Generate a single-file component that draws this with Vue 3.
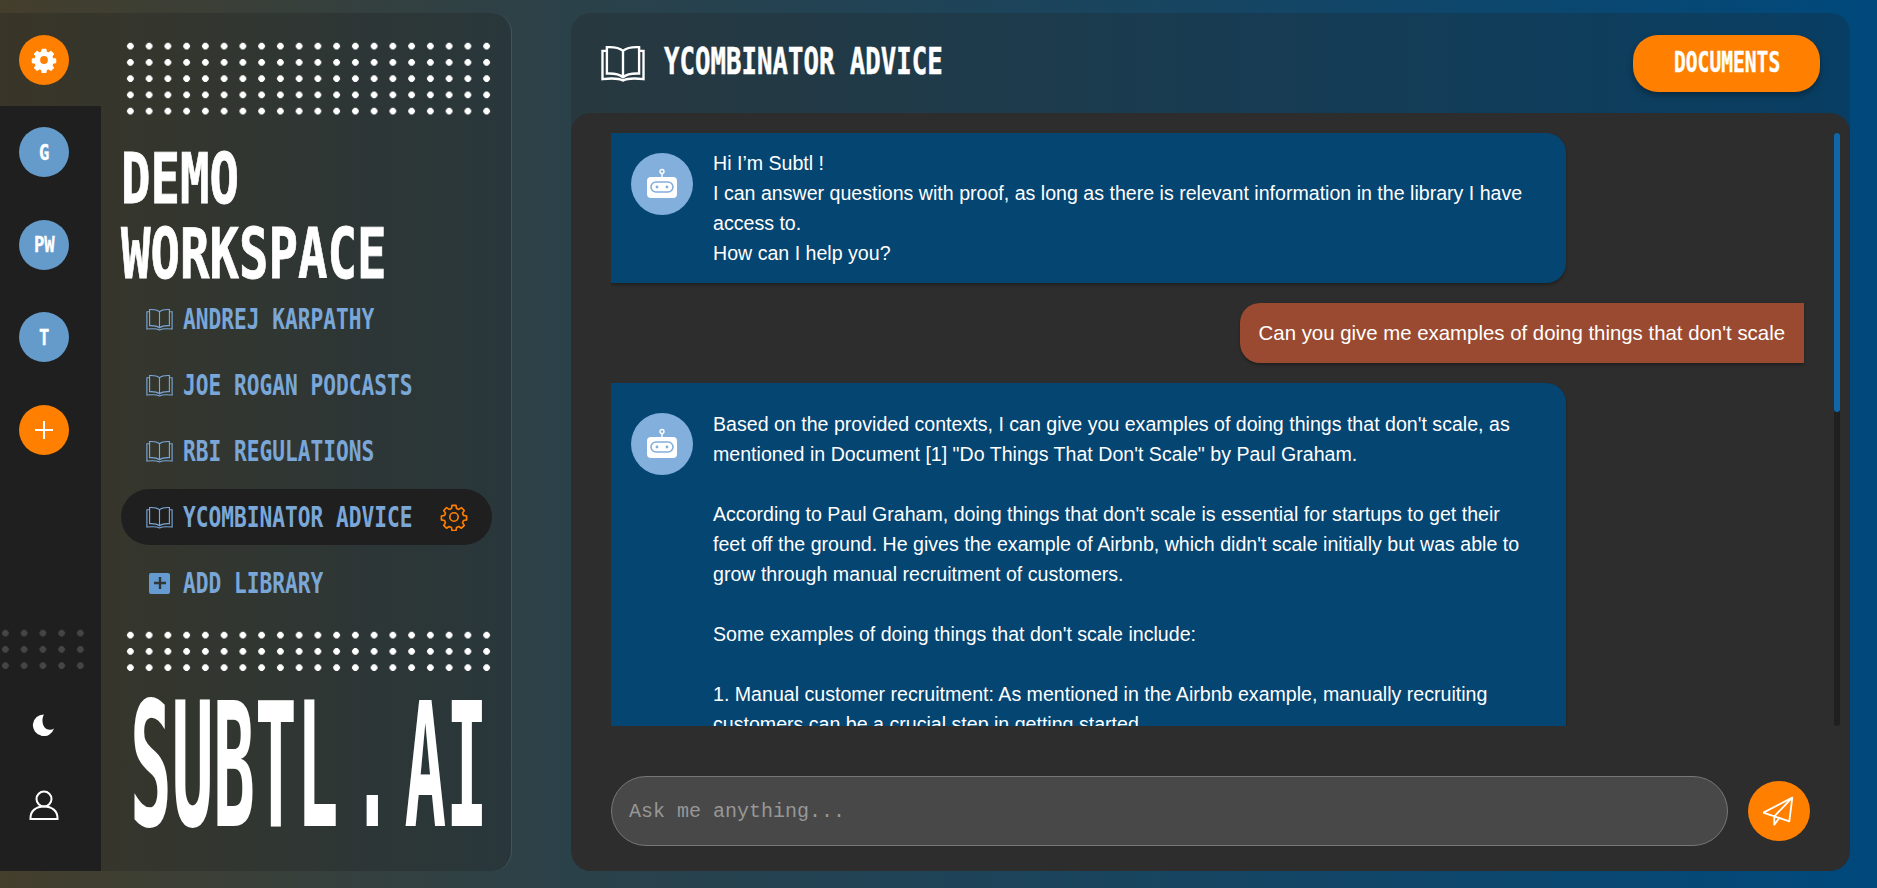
<script setup>
const libs = ['ANDREJ KARPATHY', 'JOE ROGAN PODCASTS', 'RBI REGULATIONS']
const bookPath = 'M12 3.2C10.2 1.7 7.2 1 3.2 1.2V15.6C7.2 15.4 10.2 16.1 12 17.6C13.8 16.1 16.8 15.4 20.8 15.6V1.2C16.8 1 13.8 1.7 12 3.2ZM12 3.2V17.6M3.2 3.2H.8V18.6C6 18 9.5 18 12 19.4C14.5 18 18 18 23.2 18.6V3.2H20.8'
const gearPath = 'M10.3 2h3.4l.5 2.7 1.9.8 2.3-1.5 2.4 2.4-1.5 2.3.8 1.9 2.7.5v3.4l-2.7.5-.8 1.9 1.5 2.3-2.4 2.4-2.3-1.5-1.9.8-.5 2.7h-3.4l-.5-2.7-1.9-.8-2.3 1.5-2.4-2.4 1.5-2.3-.8-1.9-2.7-.5v-3.4l2.7-.5.8-1.9-1.5-2.3 2.4-2.4 2.3 1.5 1.9-.8z'
</script>

<template>
  <div class="page">
    <aside class="sidebar">
      <div class="rail">
        <div class="rail-top">
          <button class="round orange">
            <svg width="26" height="26" viewBox="0 0 24 24"><path :d="gearPath" fill="#fff" stroke="#fff" stroke-width="1" stroke-linejoin="round" /><circle cx="12" cy="12" r="3.6" fill="#ff8000" /></svg>
          </button>
        </div>
        <div class="rail-body">
          <div class="round blue"><span class="box box-av"><span class="fit fit-av">G</span></span></div>
          <div class="round blue"><span class="box box-av2"><span class="fit fit-av">PW</span></span></div>
          <div class="round blue"><span class="box box-av"><span class="fit fit-av">T</span></span></div>
          <button class="round orange">
            <svg width="20" height="20" viewBox="0 0 20 20"><path d="M10 1V19M1 10H19" stroke="#fff" stroke-width="2" fill="none" /></svg>
          </button>
          <div class="rail-spacer"></div>
          <div class="dots rail-dots"></div>
          <svg class="moon" width="23" height="23" viewBox="0 0 24 24"><path d="M12.5 1.5A11.3 11.3 0 1 0 23 16.2C20.5 18 17.5 17.9 14.7 16.4C10.5 14 9.8 6 12.5 1.5Z" fill="#fff" /></svg>
          <svg class="user" width="30" height="31" viewBox="0 0 30 31"><circle cx="15" cy="9" r="7.5" fill="none" stroke="#fff" stroke-width="2" /><path d="M1.5 29V28C1.5 21 7 16.5 15 16.5C23 16.5 28.5 21 28.5 28V29ZM1 29H29" fill="none" stroke="#fff" stroke-width="2" /></svg>
        </div>
      </div>
      <div class="side-main">
        <div class="dots dots-top"></div>
        <h1 class="workspace">
          <span class="box box-demo"><span class="fit fit-demo">DEMO</span></span>
          <span class="box box-demo"><span class="fit fit-demo">WORKSPACE</span></span>
        </h1>
        <nav class="libs">
          <div v-for="l in libs" :key="l" class="lib">
            <svg class="book" width="27" height="23" viewBox="0 0 24 20.2"><path :d="bookPath" fill="none" stroke="#7aa7d8" stroke-width="1" /></svg>
            <span class="box box-lib"><span class="fit fit-lib">{{ l }}</span></span>
          </div>
          <div class="lib active">
            <svg class="book" width="27" height="23" viewBox="0 0 24 20.2"><path :d="bookPath" fill="none" stroke="#7aa7d8" stroke-width="1" /></svg>
            <span class="box box-lib"><span class="fit fit-lib">YCOMBINATOR ADVICE</span></span>
            <svg class="lib-gear" width="28" height="28" viewBox="0 0 24 24"><path :d="gearPath" fill="none" stroke="#ff8000" stroke-width="1.4" stroke-linejoin="round" /><circle cx="12" cy="12" r="3.6" fill="none" stroke="#ff8000" stroke-width="1.4" /></svg>
          </div>
          <div class="lib">
            <span class="add-box"><svg width="12" height="12" viewBox="0 0 12 12"><path d="M6 0V12M0 6H12" stroke="#2e3636" stroke-width="2.4" /></svg></span>
            <span class="box box-lib"><span class="fit fit-lib">ADD LIBRARY</span></span>
          </div>
        </nav>
        <div class="dots dots-bottom"></div>
        <div class="brand"><span class="box box-brand"><span class="fit fit-brand">SUBTL<span class="brand-dot">.</span>AI</span></span></div>
      </div>
    </aside>

    <main class="main">
      <header class="head">
        <div class="head-title">
          <svg width="44" height="37" viewBox="0 0 24 20.2"><path :d="bookPath" fill="none" stroke="#fff" stroke-width="1.3" /></svg>
          <span class="box box-title"><span class="fit fit-title">YCOMBINATOR ADVICE</span></span>
        </div>
        <button class="docs"><span class="box box-docs"><span class="fit fit-docs">DOCUMENTS</span></span></button>
      </header>
      <section class="chat">
        <div class="scroll-row">
          <div class="messages">
            <div class="bot">
              <div class="bot-av">
                <svg width="32" height="32" viewBox="0 0 32 32"><circle cx="16" cy="3.5" r="2" fill="none" stroke="#fff" stroke-width="1.4" /><path d="M16 5.5V9" stroke="#fff" stroke-width="1.4" /><rect x="1" y="9" width="30" height="21" rx="4" fill="#fff" /><rect x="5" y="14" width="22" height="10" rx="5" fill="none" stroke="#82afdb" stroke-width="1.6" /><circle cx="11" cy="19" r="1.4" fill="#82afdb" /><circle cx="21" cy="19" r="1.4" fill="#82afdb" /></svg>
              </div>
              <p class="bot-text">Hi I’m Subtl !<br />I can answer questions with proof, as long as there is relevant information in the library I have access to.<br />How can I help you?</p>
            </div>
            <div class="user-msg">Can you give me examples of doing things that don't scale</div>
            <div class="bot bot-long">
              <div class="bot-av">
                <svg width="32" height="32" viewBox="0 0 32 32"><circle cx="16" cy="3.5" r="2" fill="none" stroke="#fff" stroke-width="1.4" /><path d="M16 5.5V9" stroke="#fff" stroke-width="1.4" /><rect x="1" y="9" width="30" height="21" rx="4" fill="#fff" /><rect x="5" y="14" width="22" height="10" rx="5" fill="none" stroke="#82afdb" stroke-width="1.6" /><circle cx="11" cy="19" r="1.4" fill="#82afdb" /><circle cx="21" cy="19" r="1.4" fill="#82afdb" /></svg>
              </div>
              <div class="bot-text">
                <p>Based on the provided contexts, I can give you examples of doing things that don't scale, as mentioned in Document [1] "Do Things That Don't Scale" by Paul Graham.</p>
                <p>According to Paul Graham, doing things that don't scale is essential for startups to get their feet off the ground. He gives the example of Airbnb, which didn't scale initially but was able to grow through manual recruitment of customers.</p>
                <p>Some examples of doing things that don't scale include:</p>
                <p>1. Manual customer recruitment: As mentioned in the Airbnb example, manually recruiting customers can be a crucial step in getting started.</p>
              </div>
            </div>
          </div>
          <div class="track"><div class="thumb"></div></div>
        </div>
        <div class="composer">
          <div class="input">Ask me anything...</div>
          <button class="send">
            <svg width="32" height="32" viewBox="0 0 32 32"><path d="M29.3 2.6L.3 17.6L11.3 21.3L26.3 26.3ZM11.3 21.3L29.3 2.6M11.3 21.3V29.6L16.3 23" fill="none" stroke="#fff" stroke-width="1.8" stroke-linejoin="round" /></svg>
          </button>
        </div>
      </section>
    </main>
  </div>
</template>

<style>
html, body { margin: 0; height: 100%; overflow: hidden; }
</style>

<style scoped>
.page {
  width: 1877px; height: 888px; box-sizing: border-box;
  padding: 13px 27px 17px 0;
  display: flex; gap: 59px;
  background: linear-gradient(90deg, #443e2c 0%, #2c4148 29%, #00497c 100%);
  font-family: "Liberation Sans", Arial, sans-serif;
}
button { border: 0; padding: 0; cursor: pointer; }
.sidebar {
  width: 512px; flex: none; display: flex;
  border-radius: 0 20px 20px 0;
  border-right: 1px solid rgba(130, 160, 180, .28);
  background: rgba(30, 30, 30, .27);
  box-sizing: border-box;
}
.rail { width: 101px; flex: none; display: flex; flex-direction: column; }
.rail-top { height: 93px; padding-left: 19px; padding-top: 22px; box-sizing: border-box; }
.rail-body { flex: 1; background: #1f1f1f; display: flex; flex-direction: column; padding: 21px 0 50px 19px; }
.round { width: 50px; height: 50px; border-radius: 50%; display: flex; align-items: center; justify-content: center; flex: none; }
.orange { background: #ff8000; }
.blue { background: #659bcb; margin-bottom: 42.5px; color: #fff; }
.rail-spacer { flex: 1; }
.dots {
  background-image: radial-gradient(circle at center, #fff 0, #fff 3px, transparent 3.6px);
  background-size: 18.75px 16.25px;
}
.rail-dots {
  width: 94px; height: 49px; margin-left: -23px;
  background-image: radial-gradient(circle at center, #454545 0, #454545 3px, transparent 3.6px);
}
.moon { margin: 39px 0 0 13px; }
.user { margin: 54px 0 0 10px; }
.side-main { flex: 1; padding: 25px 0 0 20px; display: flex; flex-direction: column; }
.dots-top { width: 375px; height: 81px; }
.dots-bottom { width: 375px; height: 49px; margin-top: 16px; }

/* Display face: a monospace bold squeezed to the condensed proportions of the original */
.box { display: block; flex: none; white-space: nowrap; }
.fit { display: inline-block; transform-origin: left center; white-space: nowrap; font-family: "DejaVu Sans Mono", monospace; font-weight: 700; }
.box-av { width: 10px; }
.box-av2 { width: 20px; }
.fit-av { font-size: 22px; color: #fff; transform: scaleX(.78); -webkit-text-stroke: .3px #fff; }
.workspace { margin: 23px 0 0 0; display: flex; flex-direction: column; font-size: 69px; line-height: 75px; font-weight: 700; }
.box-demo { width: 270px; }
.fit-demo { color: #fff; transform: scaleX(.71); -webkit-text-stroke: .8px #fff; }
.libs { display: flex; flex-direction: column; gap: 10px; margin-top: -1px; }
.lib { height: 56px; width: 371px; display: flex; align-items: center; padding-left: 25px; box-sizing: border-box; border-radius: 28px; color: #7aa7d8; }
.lib.active { background: #1f1f1f; }
.book { flex: none; margin-right: 10px; }
.box-lib { width: 232px; }
.fit-lib { font-size: 29px; transform: scaleX(.73); }
.lib-gear { margin-left: auto; margin-right: 24px; }
.add-box { width: 21px; height: 21px; border-radius: 2px; background: #659bd0; display: flex; align-items: center; justify-content: center; margin: 0 13px 0 3px; }
.brand { margin: 15px 0 0 9px; height: 150px; }
.box-brand { width: 360px; }
.fit-brand { font-size: 173px; line-height: 150px; color: #fff; transform: scaleX(.4); }
.brand-dot { margin: 0 28px 0 33px; }
.main { flex: 1; display: flex; flex-direction: column; border-radius: 20px; overflow: hidden; background: rgba(30, 30, 30, .25); }
.head { height: 100px; flex: none; display: flex; align-items: center; justify-content: space-between; padding: 0 30px; }
.head-title { display: flex; align-items: center; gap: 19px; }
.box-title { width: 280px; margin-top: -4px; }
.fit-title { font-size: 38px; color: #fff; transform: scaleX(.677); -webkit-text-stroke: .5px #fff; }
.docs { width: 187px; height: 57px; border-radius: 25px; background: #ff8000; box-shadow: 0 3px 6px rgba(0,0,0,.35); display: flex; align-items: center; justify-content: center; }
.box-docs { width: 106px; margin-top: -2px; }
.fit-docs { font-size: 28px; color: #fff; transform: scaleX(.7); -webkit-text-stroke: .4px #fff; }
.chat { flex: 1; background: #2d2d2d; border-radius: 20px; display: flex; flex-direction: column; min-height: 0; }
.scroll-row { height: 593px; margin-top: 20px; display: flex; padding-left: 40px; padding-right: 10px; }
.messages { flex: 1; overflow: hidden; display: flex; flex-direction: column; gap: 20px; padding-right: 30px; }
.bot { width: 955px; flex: none; box-sizing: border-box; background: #054572; color: #fff; display: flex; align-items: flex-start; padding: 15px 32px 15px 20px; gap: 20px; border-radius: 0 20px 20px 0; box-shadow: 0 2px 3px rgba(0,0,0,.3); }
.bot-av { width: 62px; height: 62px; border-radius: 50%; background: #82afdb; flex: none; display: flex; align-items: center; justify-content: center; margin-top: 5px; }
.bot-long { padding-top: 26px; }
.bot-long .bot-av { margin-top: 4px; }
.bot-text { margin: 0; font-size: 19.6px; line-height: 30px; }
.bot-text p { margin: 0 0 30px; }
.user-msg { align-self: flex-end; box-sizing: border-box; height: 60px; padding: 0 19px; display: flex; align-items: center; background: #9a4a30; color: #fff; font-size: 20.4px; border-radius: 20px 0 0 20px; flex: none; box-shadow: 0 2px 3px rgba(0,0,0,.3); }
.track { width: 6px; background: #1f1f1f; border-radius: 3px; flex: none; }
.thumb { height: 279px; background: #0f66a8; border-radius: 3px; }
.composer { display: flex; align-items: center; padding: 50px 0 0 40px; gap: 20px; }
.input { width: 1117px; height: 70px; box-sizing: border-box; border: 1px solid #777; border-radius: 35px; background: #484848; color: #979797; font-family: "Liberation Mono", monospace; font-size: 20px; display: flex; align-items: center; padding-left: 17px; }
.send { width: 62px; height: 60px; border-radius: 50%; background: #ff8000; display: flex; align-items: center; justify-content: center; }
</style>
